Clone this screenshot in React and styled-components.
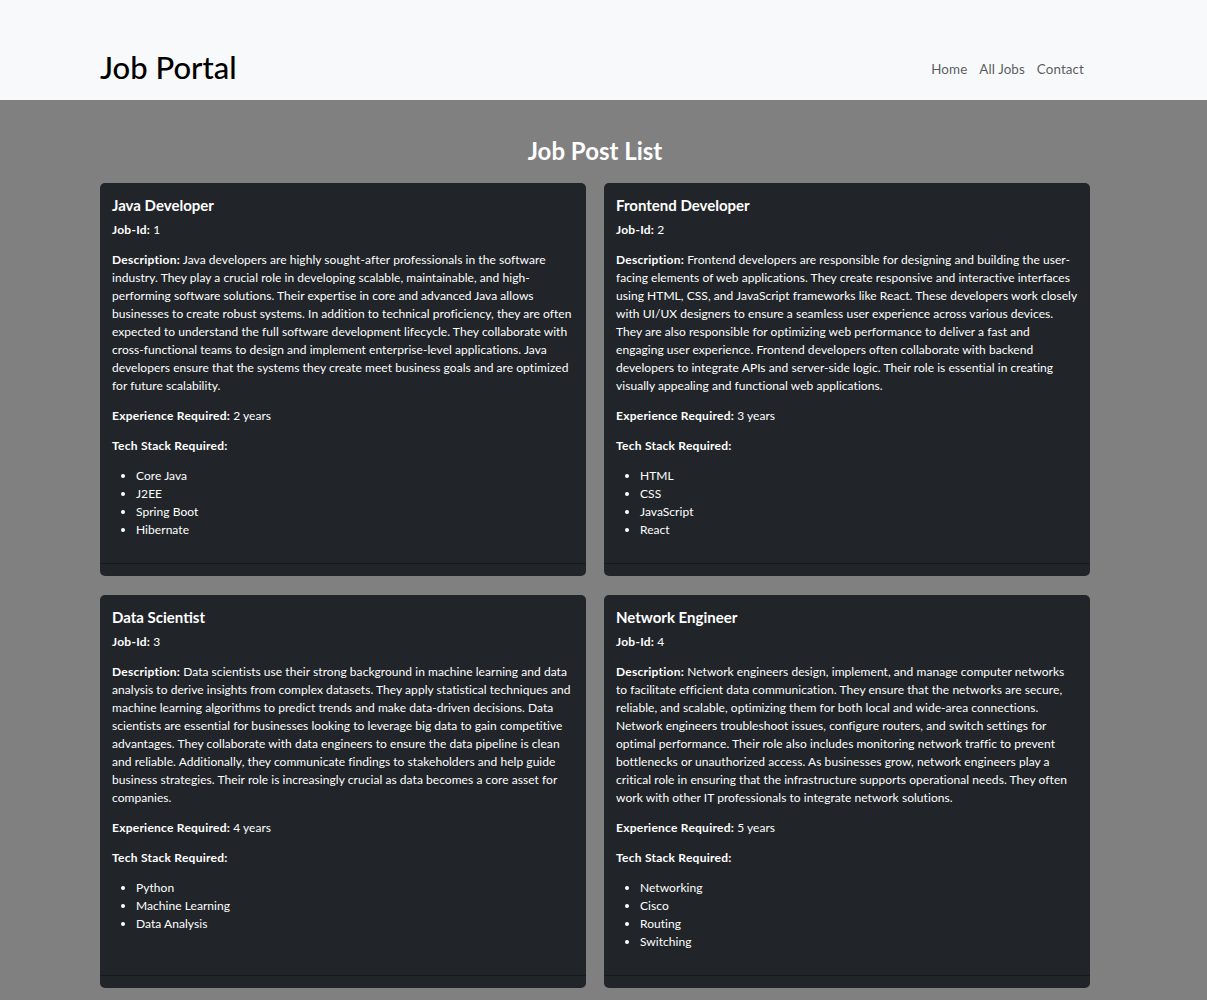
import React from "react";
import styled, { createGlobalStyle } from "styled-components";

const FONT = `Lato, "Noto Sans", "Liberation Sans", sans-serif`;

const Global = createGlobalStyle`
  * { box-sizing: border-box; }
  html, body { margin: 0; padding: 0; }
  body {
    font-family: ${FONT};
    font-size: 12px;
    line-height: 1.5;
    color: #212529;
    background: #808080;
  }
`;

const Nav = styled.nav`
  background: #f8f9fa;
  height: 100px;
  padding: 36px 17px 0 0;
  display: flex;
  align-items: center;
`;

const Container = styled.div`
  width: 990px;
  margin: 0 auto;
`;

const NavInner = styled(Container)`
  display: flex;
  align-items: center;
  justify-content: space-between;
`;

const Brand = styled.h1`
  margin: 0;
  font-size: 31px;
  font-weight: 500;
  line-height: 1.2;
  color: #000;
`;

const Links = styled.ul`
  list-style: none;
  display: flex;
  margin: 0;
  padding: 3px 0 0;
`;

const NavLink = styled.a`
  display: block;
  padding: 6px 6px;
  font-size: 13.4px;
  letter-spacing: 0.1px;
  color: rgba(33, 37, 41, 0.75);
  text-decoration: none;
`;

const Main = styled.main`
  background: #808080;
  padding: 37px 17px 24px 0;
`;

const PageTitle = styled.h2`
  margin: 0 0 17px;
  text-align: center;
  color: #fff;
  font-size: 24px;
  font-weight: 700;
  line-height: 1.2;
`;

const Grid = styled(Container)`
  display: grid;
  grid-template-columns: 1fr 1fr;
  column-gap: 18px;
  row-gap: 19px;
`;

const Card = styled.div`
  background: #212529;
  color: #fff;
  border-radius: 5px;
  display: flex;
  flex-direction: column;
  overflow: hidden;
  letter-spacing: 0.05px;
`;

const CardBody = styled.div`
  padding: 13px 12px 12px;
  flex: 1;
`;

const CardTitle = styled.h5`
  margin: 0 0 6px;
  font-size: 15px;
  font-weight: 700;
  line-height: 19px;
  letter-spacing: 0;
`;

const Para = styled.p`
  margin: 0 0 12px;
`;

const Label = styled.strong`
  font-weight: 700;
  letter-spacing: 0.25px;
`;

const Stack = styled.ul`
  margin: 0 0 12px;
  padding-left: 24px;
`;

const CardFooter = styled.div`
  height: 13px;
  border-top: 1px solid rgba(0, 0, 0, 0.3);
`;

const jobs = [
  {
    id: 1,
    title: "Java Developer",
    desc:
      "Java developers are highly sought-after professionals in the software industry. They play a crucial role in developing scalable, maintainable, and high-performing software solutions. Their expertise in core and advanced Java allows businesses to create robust systems. In addition to technical proficiency, they are often expected to understand the full software development lifecycle. They collaborate with cross-functional teams to design and implement enterprise-level applications. Java developers ensure that the systems they create meet business goals and are optimized for future scalability.",
    exp: 2,
    stack: ["Core Java", "J2EE", "Spring Boot", "Hibernate"],
  },
  {
    id: 2,
    title: "Frontend Developer",
    desc:
      "Frontend developers are responsible for designing and building the user-facing elements of web applications. They create responsive and interactive interfaces using HTML, CSS, and JavaScript frameworks like React. These developers work closely with UI/UX designers to ensure a seamless user experience across various devices. They are also responsible for optimizing web performance to deliver a fast and engaging user experience. Frontend developers often collaborate with backend developers to integrate APIs and server-side logic. Their role is essential in creating visually appealing and functional web applications.",
    exp: 3,
    stack: ["HTML", "CSS", "JavaScript", "React"],
  },
  {
    id: 3,
    title: "Data Scientist",
    desc:
      "Data scientists use their strong background in machine learning and data analysis to derive insights from complex datasets. They apply statistical techniques and machine learning algorithms to predict trends and make data-driven decisions. Data scientists are essential for businesses looking to leverage big data to gain competitive advantages. They collaborate with data engineers to ensure the data pipeline is clean and reliable. Additionally, they communicate findings to stakeholders and help guide business strategies. Their role is increasingly crucial as data becomes a core asset for companies.",
    exp: 4,
    stack: ["Python", "Machine Learning", "Data Analysis"],
  },
  {
    id: 4,
    title: "Network Engineer",
    desc:
      "Network engineers design, implement, and manage computer networks to facilitate efficient data communication. They ensure that the networks are secure, reliable, and scalable, optimizing them for both local and wide-area connections. Network engineers troubleshoot issues, configure routers, and switch settings for optimal performance. Their role also includes monitoring network traffic to prevent bottlenecks or unauthorized access. As businesses grow, network engineers play a critical role in ensuring that the infrastructure supports operational needs. They often work with other IT professionals to integrate network solutions.",
    exp: 5,
    stack: ["Networking", "Cisco", "Routing", "Switching"],
  },
];

export default function App() {
  return (
    <>
      <Global />
      <Nav>
        <NavInner>
          <Brand>Job Portal</Brand>
          <Links>
            <li><NavLink href="#">Home</NavLink></li>
            <li><NavLink href="#">All Jobs</NavLink></li>
            <li><NavLink href="#">Contact</NavLink></li>
          </Links>
        </NavInner>
      </Nav>
      <Main>
        <PageTitle>Job Post List</PageTitle>
        <Grid>
          {jobs.map((j) => (
            <Card key={j.id}>
              <CardBody>
                <CardTitle>{j.title}</CardTitle>
                <Para><Label>Job-Id:</Label> {j.id}</Para>
                <Para><Label>Description:</Label> {j.desc}</Para>
                <Para><Label>Experience Required:</Label> {j.exp} years</Para>
                <Para><Label>Tech Stack Required:</Label></Para>
                <Stack>
                  {j.stack.map((s) => (
                    <li key={s}>{s}</li>
                  ))}
                </Stack>
              </CardBody>
              <CardFooter />
            </Card>
          ))}
        </Grid>
      </Main>
    </>
  );
}
